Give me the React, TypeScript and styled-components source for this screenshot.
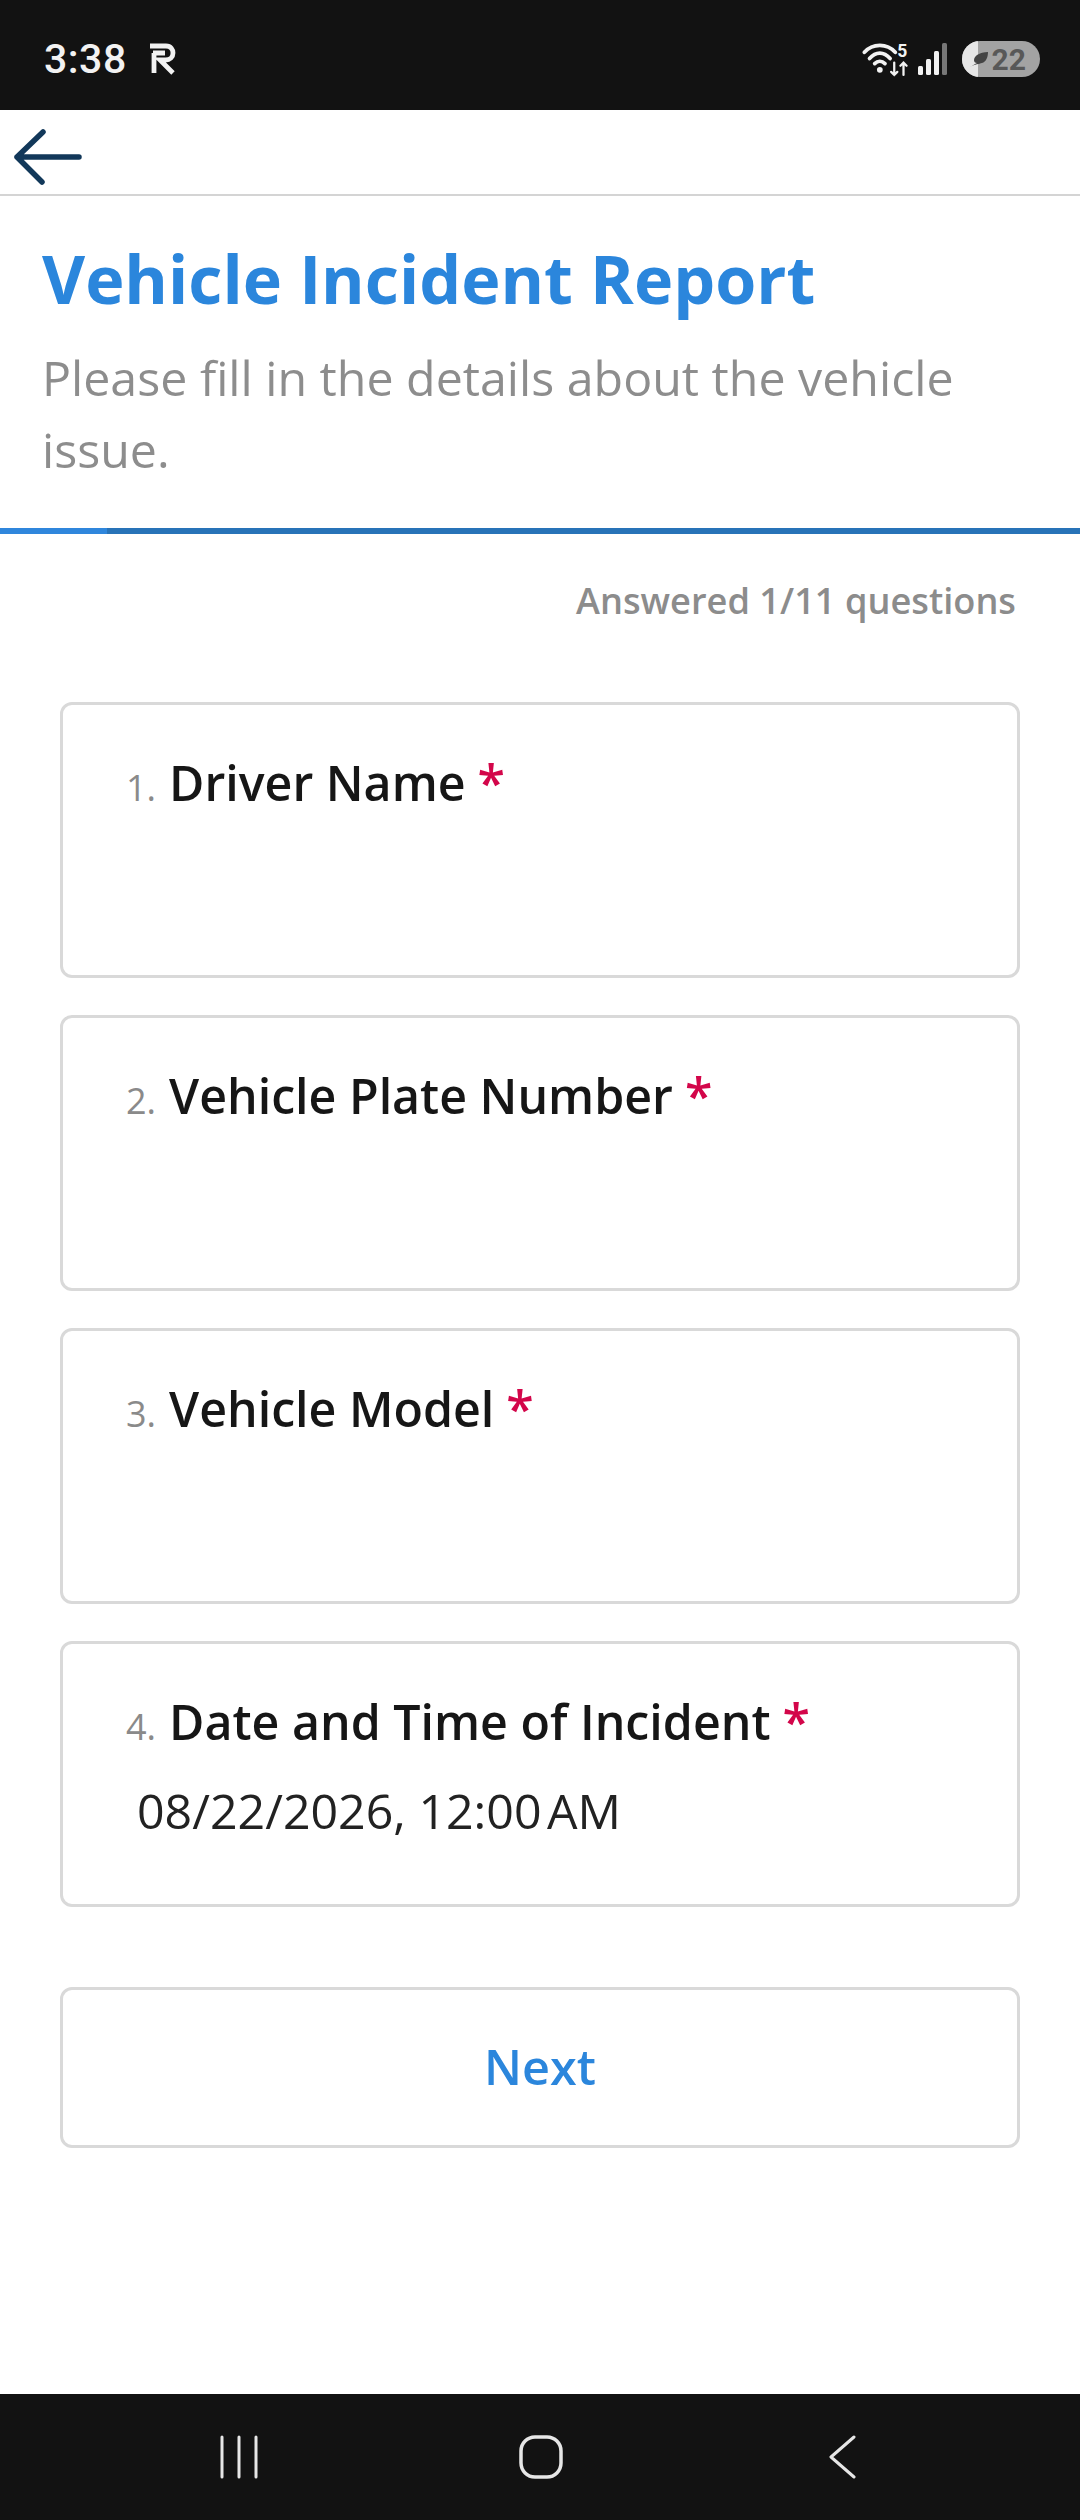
import React from "react";
import styled, { createGlobalStyle } from "styled-components";

const Global = createGlobalStyle`
  html, body { margin: 0; padding: 0; background: #fff; }
  body { font-family: "Open Sans", "Noto Sans", sans-serif; }
`;

const Screen = styled.div`
  width: 1080px;
  height: 2520px;
  display: flex;
  flex-direction: column;
  background: #fff;
  overflow: hidden;
`;

const StatusBar = styled.div`
  height: 110px;
  flex: none;
  box-sizing: border-box;
  padding: 8px 40px 0 44px;
  background: #121212;
  display: flex;
  align-items: center;
  justify-content: space-between;
  color: #f2f2f2;
`;

const StatusLeft = styled.div`
  display: flex;
  align-items: center;
  gap: 23px;
`;

const Clock = styled.span`
  font-family: "Roboto", sans-serif;
  font-size: 41px;
  font-weight: 500;
  letter-spacing: 0.5px;
`;

const StatusRight = styled.div`
  display: flex;
  align-items: center;
  gap: 10px;
`;

const WifiIcon = styled.svg`
  margin-right: -3px;
`;

const Battery = styled.div`
  position: relative;
  width: 78px;
  height: 36px;
  margin-left: 3px;
  border-radius: 18px;
  overflow: hidden;
  background: #a3a3a3;
  display: flex;
  align-items: center;
  justify-content: flex-end;
  padding-right: 14px;
  box-sizing: border-box;
  color: #585858;
  font-family: "Roboto", sans-serif;
  font-size: 30px;
  font-weight: 700;
`;

const BatteryFill = styled.div`
  position: absolute;
  left: 0;
  top: 0;
  bottom: 0;
  width: 16px;
  background: #e6e6e6;
`;

const BatteryLeaf = styled.svg`
  position: absolute;
  left: 7px;
  top: 9px;
`;

const Toolbar = styled.div`
  height: 84px;
  flex: none;
  box-sizing: content-box;
  display: flex;
  align-items: center;
  padding-left: 14px;
  border-bottom: 2px solid #d4d4d4;
`;

const BackIcon = styled.svg`
  margin-top: 9px;
`;

const Header = styled.div`
  height: 332px;
  flex: none;
  box-sizing: border-box;
  padding: 38px 42px 0;
`;

const Title = styled.h1`
  margin: 0;
  font-size: 66.4px;
  line-height: 88px;
  font-weight: 700;
  color: #2b86dc;
`;

const Subtitle = styled.p`
  margin: 19px 0 0;
  font-size: 48.3px;
  line-height: 72px;
  font-weight: 400;
  color: #8d8d8d;
`;

const ProgressTrack = styled.div`
  height: 6px;
  flex: none;
  background: #2873b8;
`;

const ProgressFill = styled.div`
  height: 100%;
  background: #2f86dc;
`;

const Counter = styled.div`
  flex: none;
  margin-top: 41px;
  padding-right: 64px;
  text-align: right;
  font-size: 36.2px;
  line-height: 50px;
  font-weight: 600;
  color: #8c8c8c;
`;

const Form = styled.div`
  margin-top: 77px;
  padding: 0 60px;
  display: flex;
  flex-direction: column;
  gap: 37px;
`;

const Card = styled.div<{ $h: number }>`
  height: ${(p) => p.$h}px;
  box-sizing: border-box;
  border: 3px solid #d9d9d9;
  border-radius: 12px;
  padding: 43px 0 0 63px;
`;

const Question = styled.div`
  display: flex;
  align-items: baseline;
  white-space: nowrap;
`;

const Num = styled.span`
  font-size: 36px;
  color: #8a8a8a;
  margin-right: 13px;
`;

const Label = styled.span`
  font-size: 48.3px;
  line-height: 68px;
  font-weight: 600;
  color: #161616;
`;

const Star = styled.span`
  font-size: 50px;
  line-height: 68px;
  font-weight: 600;
  color: #d3064a;
  margin-left: 12px;
`;

const Value = styled.div`
  margin: 21px 0 0 11px;
  font-size: 48.3px;
  line-height: 68px;
  font-weight: 400;
  color: #222;
`;

const TimeGroup = styled.span`
  word-spacing: -7px;
`;

const NextButton = styled.button`
  margin: 43px 0 0;
  height: 161px;
  width: 100%;
  background: #fff;
  border: 3px solid #d9d9d9;
  border-radius: 12px;
  font-family: inherit;
  font-size: 48.5px;
  font-weight: 600;
  color: #2b86dc;
  padding: 0 0 3px;
`;

const Spacer = styled.div`
  flex: 1;
`;

const NavBar = styled.div`
  height: 126px;
  flex: none;
  background: #121212;
  display: grid;
  grid-template-columns: 478px 1fr 1fr;
  align-items: center;
`;

const NavCell = styled.div<{ $pad: number }>`
  display: flex;
  padding-left: ${(p) => p.$pad}px;
`;

const questions = [
  { n: 1, label: "Driver Name" },
  { n: 2, label: "Vehicle Plate Number" },
  { n: 3, label: "Vehicle Model" },
];

export default function App() {
  return (
    <Screen>
      <Global />
      <StatusBar>
        <StatusLeft>
          <Clock>3:38</Clock>
          <svg width="26" height="32" viewBox="0 0 26 32">
            <path
              d="M0 3 H16 C21 3 23 6.5 23 10 C23 14 20 17 15.5 17 H10 L23 30 M3 10 H15 M4 10 V30"
              stroke="#f2f2f2"
              strokeWidth="4.8"
              fill="none"
            />
          </svg>
        </StatusLeft>
        <StatusRight>
          <WifiIcon width="48" height="35" viewBox="0 0 46 34" fill="none">
            <g stroke="#f2f2f2" strokeWidth="3.6" strokeLinecap="round">
              <path d="M2 10 C10 1 24 1 32 10" />
              <path d="M7 16 C13 9 21 9 27 16" />
              <path d="M12 21 C15 18 19 18 22 21" />
              <path d="M31 20 V32 M28 29 L31 32 L34 29" strokeWidth="2.2" />
              <path d="M40 32 V20 M37 23 L40 20 L43 23" strokeWidth="2.2" />
            </g>
            <circle cx="17" cy="27" r="2.8" fill="#f2f2f2" />
            <text x="34" y="15" fontFamily="Roboto" fontSize="17" fontWeight="700" fill="#f2f2f2">5</text>
          </WifiIcon>
          <svg width="32" height="34" viewBox="0 0 32 34">
            <rect x="1" y="24" width="5" height="9" rx="1.5" fill="#f2f2f2" />
            <rect x="9" y="17" width="5" height="16" rx="1.5" fill="#f2f2f2" />
            <rect x="17" y="9" width="5" height="24" rx="1.5" fill="#f2f2f2" />
            <rect x="25" y="1" width="5" height="32" rx="1.5" fill="#777" />
          </svg>
          <Battery>
            <BatteryFill />
            <BatteryLeaf width="20" height="18" viewBox="0 0 20 18">
              <path d="M1 17 C4 15 6 14 8 13 C4 13 4 8 8 5 C11 3 15 2 19 2 C19 7 17 12 13 13 C10 14 6 14 1 17 Z" fill="#444" />
            </BatteryLeaf>
            22
          </Battery>
        </StatusRight>
      </StatusBar>

      <Toolbar>
        <BackIcon width="68" height="56" viewBox="0 0 68 56" fill="none">
          <path
            d="M65 28 H3 M29 3 L3 28 L28 53"
            stroke="#12385a"
            strokeWidth="5.5"
            strokeLinecap="round"
            strokeLinejoin="round"
          />
        </BackIcon>
      </Toolbar>

      <Header>
        <Title>Vehicle Incident Report</Title>
        <Subtitle>Please fill in the details about the vehicle issue.</Subtitle>
      </Header>

      <ProgressTrack>
        <ProgressFill style={{ width: "9.9%" }} />
      </ProgressTrack>

      <Counter>Answered 1/11 questions</Counter>

      <Form>
        {questions.map((q) => (
          <Card key={q.n} $h={276}>
            <Question>
              <Num>{q.n}.</Num>
              <Label>{q.label}</Label>
              <Star>*</Star>
            </Question>
          </Card>
        ))}
        <Card $h={266}>
          <Question>
            <Num>4.</Num>
            <Label>Date and Time of Incident</Label>
            <Star>*</Star>
          </Question>
          <Value>
            08/22/2026, <TimeGroup>12:00 AM</TimeGroup>
          </Value>
        </Card>
        <NextButton>Next</NextButton>
      </Form>

      <Spacer />

      <NavBar>
        <NavCell $pad={219}>
          <svg width="40" height="44" viewBox="0 0 40 44" fill="none">
            <path d="M3 2 V42 M20 2 V42 M37 2 V42" stroke="#e6e6e6" strokeWidth="3" strokeLinecap="round" />
          </svg>
        </NavCell>
        <NavCell $pad={41}>
          <svg width="44" height="44" viewBox="0 0 44 44" fill="none">
            <rect x="2" y="2" width="40" height="40" rx="14" stroke="#e6e6e6" strokeWidth="3.5" />
          </svg>
        </NavCell>
        <NavCell $pad={49}>
          <svg width="28" height="44" viewBox="0 0 28 44" fill="none">
            <path d="M26 2 L3 22 L26 42" stroke="#e6e6e6" strokeWidth="3" strokeLinecap="round" strokeLinejoin="round" />
          </svg>
        </NavCell>
      </NavBar>
    </Screen>
  );
}
